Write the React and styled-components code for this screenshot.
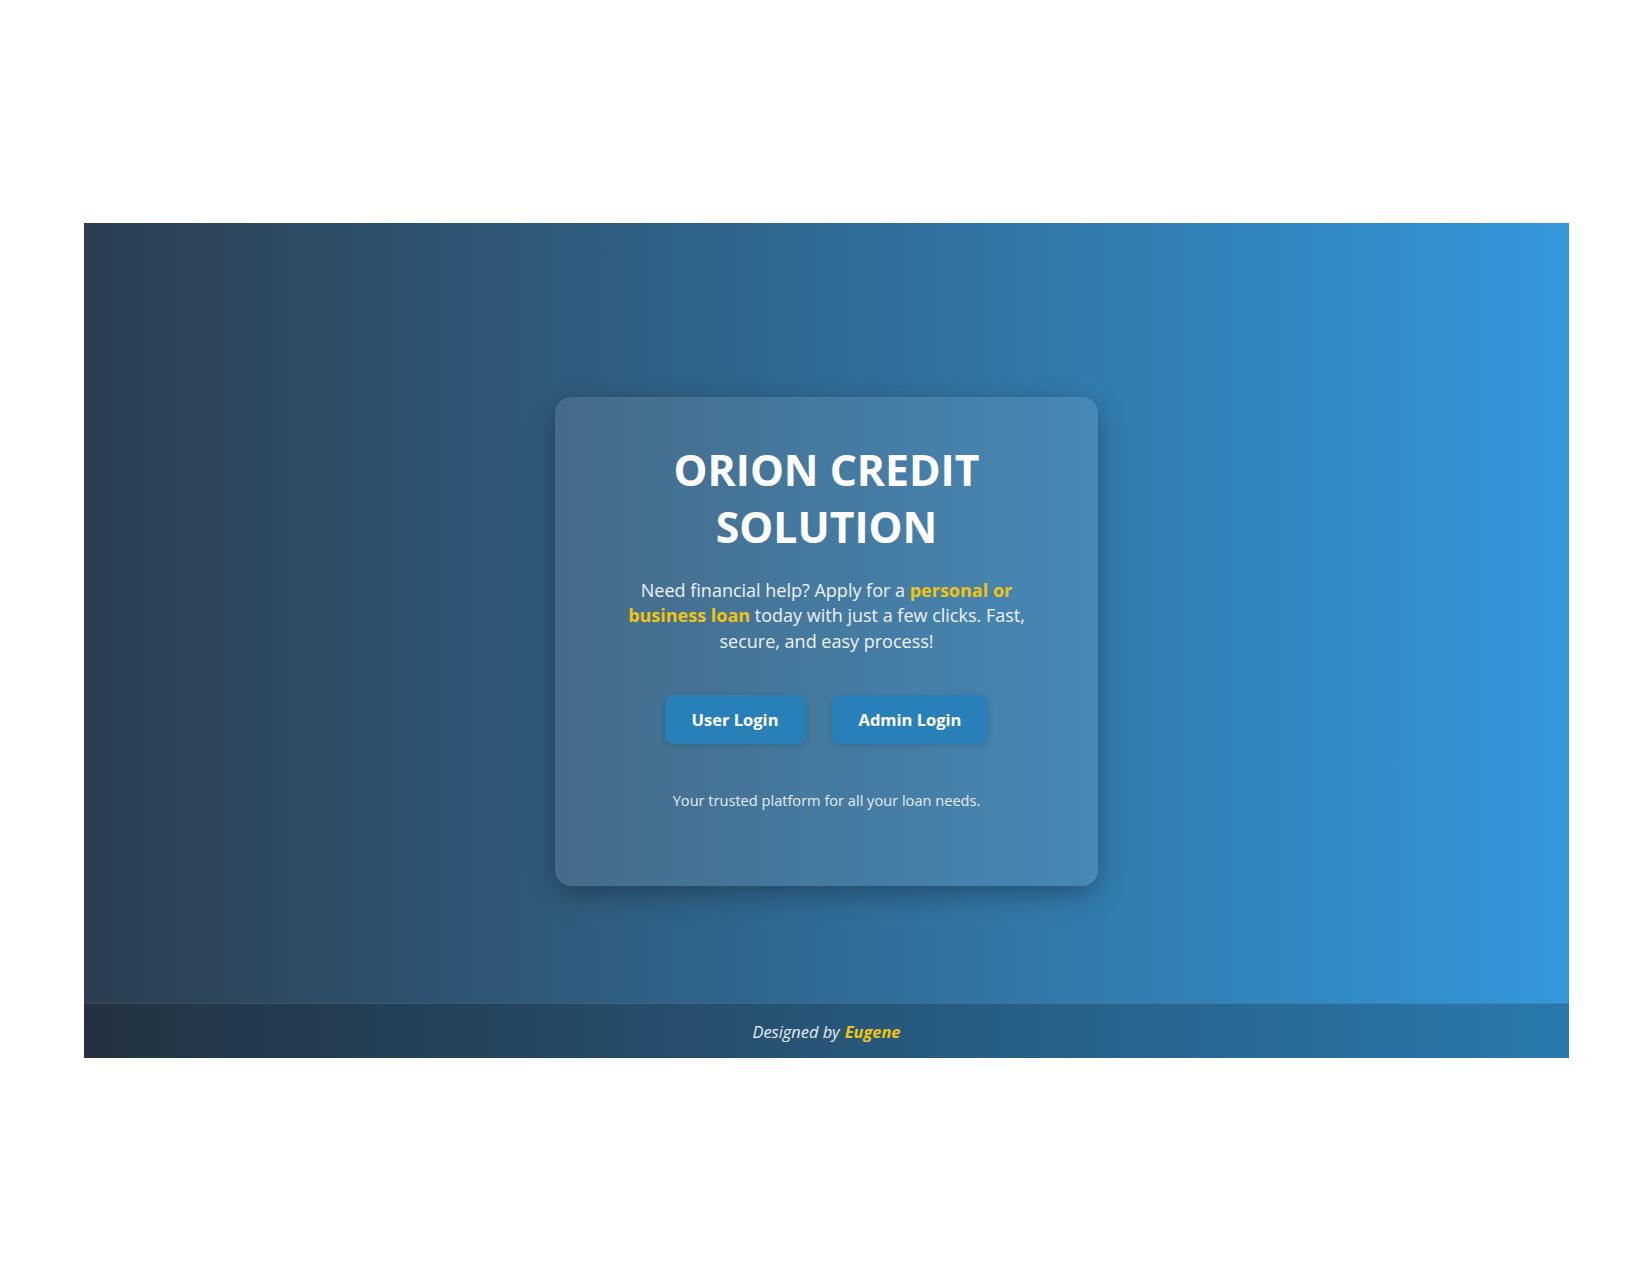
import React from "react";
import styled, { createGlobalStyle } from "styled-components";

const GlobalStyle = createGlobalStyle`
  * { box-sizing: border-box; }
  body {
    margin: 0;
    background: #ffffff;
    font-family: "Open Sans", "Noto Sans", Arial, sans-serif;
  }
`;

const Frame = styled.div`
  padding: 223px 81px 217px 84px;
`;

const Page = styled.div`
  display: flex;
  flex-direction: column;
  background: linear-gradient(to right, #2c3e50, #3498db);
  color: #ffffff;
`;

const Hero = styled.main`
  height: 780px;
  display: flex;
  justify-content: center;
  align-items: flex-start;
  padding-top: 174px;
`;

const Card = styled.section`
  width: 543px;
  height: 489px;
  padding: 44px 40px 0;
  border-radius: 16px;
  background: rgba(255, 255, 255, 0.1);
  box-shadow: 0 8px 28px rgba(0, 0, 0, 0.3);
  text-align: center;
`;

const Title = styled.h1`
  margin: 0;
  font-size: 42.7px;
  line-height: 57px;
  font-weight: 700;
`;

const Intro = styled.p`
  margin: 23px auto 0;
  max-width: 430px;
  font-size: 18px;
  line-height: 25.3px;
  color: #eef3f8;
`;

const Highlight = styled.strong`
  color: #f1c40f;
  font-weight: 700;
`;

const Actions = styled.div`
  display: flex;
  justify-content: center;
  gap: 26px;
  margin-top: 41px;
`;

const Button = styled.button`
  height: 49px;
  padding: 0 27px;
  border: none;
  border-radius: 8px;
  background: #2980b9;
  color: #ffffff;
  font-family: inherit;
  font-size: 16.5px;
  font-weight: 700;
  box-shadow: 0 2px 6px rgba(0, 0, 0, 0.12);
  cursor: pointer;
`;

const Tagline = styled.p`
  margin: 46px 0 0;
  font-size: 14.6px;
  line-height: 20px;
  color: #e6edf4;
`;

const Footer = styled.footer`
  height: 55px;
  display: flex;
  align-items: center;
  justify-content: center;
  gap: 5px;
  background: rgba(0, 0, 0, 0.2);
  border-top: 1px solid rgba(255, 255, 255, 0.12);
  font-size: 16.4px;
  font-style: italic;
  color: #e6edf4;
`;

export default function App() {
  return (
    <>
      <GlobalStyle />
      <Frame>
        <Page>
          <Hero>
            <Card>
              <Title>
                ORION CREDIT
                <br />
                SOLUTION
              </Title>
              <Intro>
                Need financial help? Apply for a{" "}
                <Highlight>personal or</Highlight>{" "}
                <Highlight>business loan</Highlight> today with just a few
                clicks. Fast, secure, and easy process!
              </Intro>
              <Actions>
                <Button>User Login</Button>
                <Button>Admin Login</Button>
              </Actions>
              <Tagline>Your trusted platform for all your loan needs.</Tagline>
            </Card>
          </Hero>
          <Footer>
            <span>Designed by</span>
            <Highlight>Eugene</Highlight>
          </Footer>
        </Page>
      </Frame>
    </>
  );
}
